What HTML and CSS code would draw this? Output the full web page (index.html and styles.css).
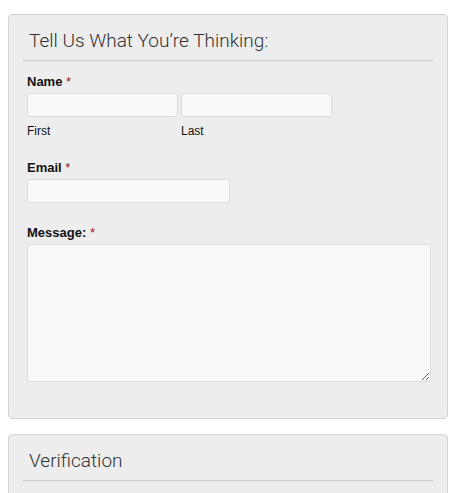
FILE: index.html
```html
<!DOCTYPE html>
<html>
<head>
<meta charset="utf-8">
<link rel="stylesheet" href="styles.css">
</head>
<body>
<div class="panel">
  <h2 class="panel-title">Tell Us What You’re Thinking:</h2>
  <div class="rule"></div>
  <form class="form">
    <div class="field">
      <label class="label">Name <span class="req">*</span></label>
      <div class="name-row">
        <div class="sub">
          <input class="input name" type="text">
          <span class="sublabel">First</span>
        </div>
        <div class="sub">
          <input class="input name" type="text">
          <span class="sublabel">Last</span>
        </div>
      </div>
    </div>
    <div class="field">
      <label class="label">Email <span class="req">*</span></label>
      <input class="input email" type="text">
    </div>
    <div class="field">
      <label class="label">Message: <span class="req">*</span></label>
      <textarea class="input message"></textarea>
    </div>
  </form>
</div>
<div class="panel panel-second">
  <h2 class="panel-title">Verification</h2>
  <div class="rule"></div>
</div>
</body>
</html>
```

FILE: styles.css
```css
html, body {
  margin: 0;
  padding: 0;
  background: #ffffff;
}
body {
  padding: 14px 6px 0 8px;
  font-family: "Liberation Sans", Arial, sans-serif;
  color: #222;
}
.panel {
  width: 440px;
  box-sizing: border-box;
  background: #ededed;
  border: 1px solid #d3d3d3;
  border-radius: 4px;
  padding: 14px 14px 36px;
}
.panel-second {
  margin-top: 15px;
  padding-bottom: 20px;
}
.panel-title {
  margin: 0;
  padding: 0 0 0 6px;
  font-family: Roboto, "Liberation Sans", sans-serif;
  font-weight: 300;
  font-size: 19px;
  line-height: 24px;
  color: #333;
}
.rule {
  margin-top: 7px;
  height: 1px;
  background: #cfcfcf;
}
.form {
  padding: 12px 0 0 4px;
  display: flex;
  flex-direction: column;
  gap: 21px;
}
.field {
  display: flex;
  flex-direction: column;
  align-items: flex-start;
}
.label {
  font-weight: bold;
  font-size: 13px;
  line-height: 16px;
  color: #111;
  padding-top: 1px;
  margin-bottom: 3px;
}
.req {
  color: #9b1c1c;
  font-weight: normal;
}
.name-row {
  display: flex;
  gap: 3px;
}
.sub {
  display: flex;
  flex-direction: column;
}
.sublabel {
  font-size: 12px;
  line-height: 14px;
  margin-top: 7px;
  color: #111;
}
.input {
  box-sizing: border-box;
  margin: 0;
  background: #f9f9f9;
  border: 1px solid #dcdcdc;
  border-radius: 3px;
  height: 24px;
  font: 13px "Liberation Sans", Arial, sans-serif;
  outline: none;
}
.name {
  width: 151px;
}
.email {
  width: 203px;
}
.message {
  width: 404px;
  height: 138px;
  resize: both;
  display: block;
}
```
